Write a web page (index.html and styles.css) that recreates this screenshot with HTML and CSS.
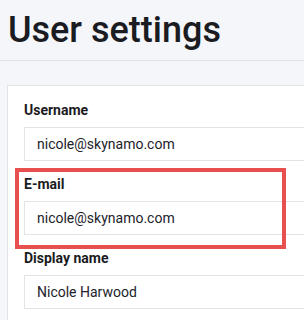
FILE: index.html
```html
<!DOCTYPE html>
<html>
<head>
<meta charset="utf-8">
<link rel="stylesheet" href="styles.css">
</head>
<body>
<header class="page-header">
  <h1 class="title">User settings</h1>
</header>
<main class="content">
  <section class="card">
    <div class="field">
      <label class="label">Username</label>
      <div class="input">nicole@skynamo.com</div>
    </div>
    <div class="field">
      <label class="label">E-mail</label>
      <div class="input">nicole@skynamo.com</div>
    </div>
    <div class="field">
      <label class="label">Display name</label>
      <div class="input">Nicole Harwood</div>
    </div>
  </section>
  <div class="highlight"></div>
</main>
</body>
</html>
```
FILE: styles.css
```css
html, body {
  margin: 0;
  padding: 0;
  background: #f5f6fa;
  overflow: hidden;
  font-family: Roboto, "Liberation Sans", sans-serif;
}
.page-header {
  box-sizing: content-box;
  height: 54px;
  padding: 6px 0 0 8px;
  border-bottom: 1px solid #e0e1e6;
}
.title {
  margin: 0;
  font-size: 36px;
  line-height: 48px;
  font-weight: 500;
  color: #1b1b22;
}
.content {
  position: relative;
  padding: 24px 0 0 7px;
}
.card {
  width: 380px;
  background: #ffffff;
  border: 1px solid #e3e4e8;
  border-right: none;
  padding: 14px 16px 16px 16px;
}
.field {
  display: flex;
  flex-direction: column;
  margin-bottom: 13px;
}
.label {
  font-size: 14px;
  line-height: 20px;
  font-weight: 700;
  color: #1b1b22;
  margin-bottom: 7px;
}
.input {
  height: 34px;
  box-sizing: border-box;
  border: 1px solid #e2e3e6;
  background: #fff;
  padding: 0 12px;
  font-size: 14px;
  line-height: 32px;
  color: #22222a;
}
.highlight {
  position: absolute;
  left: 15px;
  top: 107px;
  width: 271px;
  height: 81px;
  box-sizing: border-box;
  border: 4px solid #e8504f;
}
```
